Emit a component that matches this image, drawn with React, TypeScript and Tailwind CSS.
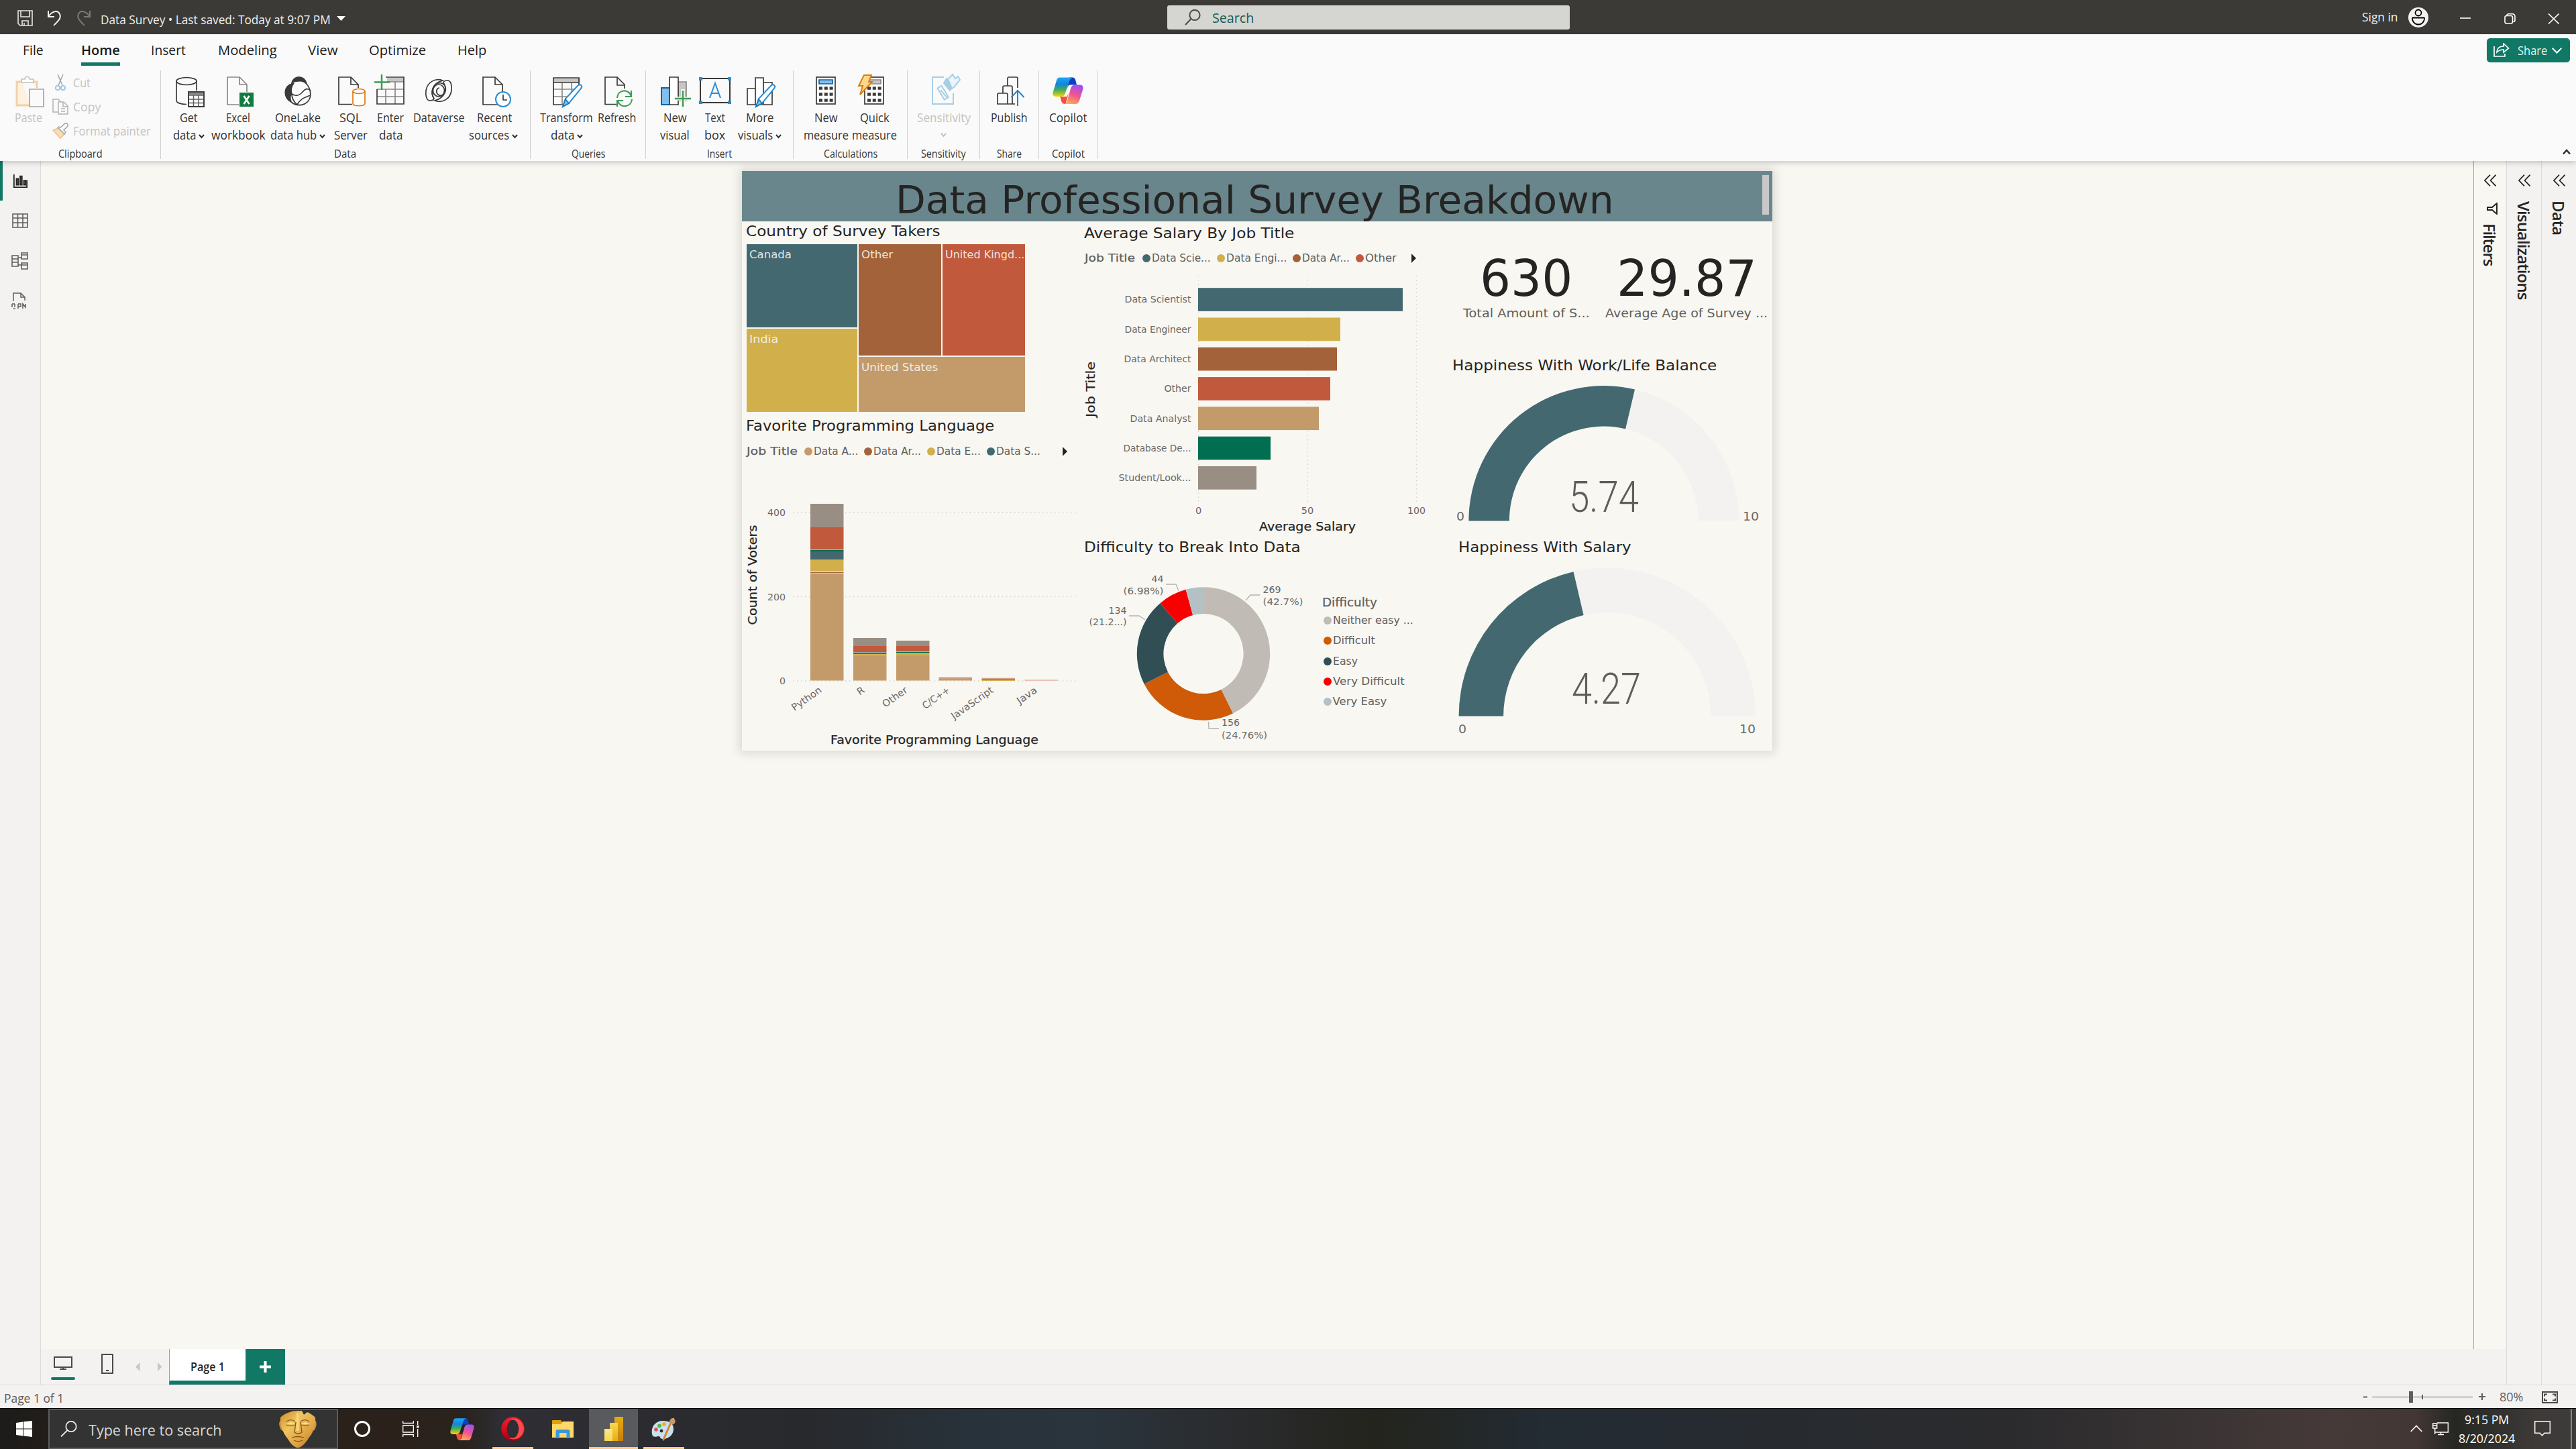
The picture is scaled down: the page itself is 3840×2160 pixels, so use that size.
import { useLayoutEffect, useRef } from "react";
import type { ReactNode } from "react";

/* Text squeezed or stretched horizontally to the width of its box. */
function Fit({ className = "", children }: { className?: string; children: ReactNode }) {
  const outer = useRef<HTMLSpanElement>(null);
  const inner = useRef<HTMLSpanElement>(null);
  useLayoutEffect(() => {
    const o = outer.current;
    const i = inner.current;
    if (o && i && i.offsetWidth > 0) {
      i.style.transform = `scaleX(${o.clientWidth / i.offsetWidth})`;
    }
  });
  return (
    <span ref={outer} className={"block shrink-0 " + className}>
      <span ref={inner} className="block w-max origin-left whitespace-nowrap">
        {children}
      </span>
    </span>
  );
}

/* Chart label inside an SVG. */
function Label(p: {
  x: number;
  y: number;
  w?: number;
  size?: number;
  fill?: string;
  anchor?: "start" | "middle" | "end";
  rotate?: number;
  heavy?: boolean;
  children: string;
}) {
  return (
    <text
      x={p.x}
      y={p.y}
      fontSize={p.size ?? 14.5}
      fill={p.fill ?? "#6a6866"}
      stroke={p.heavy ? "#252423" : undefined}
      strokeWidth={p.heavy ? 0.25 : undefined}
      textAnchor={p.anchor ?? "start"}
      textLength={p.w}
      lengthAdjust="spacingAndGlyphs"
      transform={p.rotate ? `rotate(${p.rotate} ${p.x} ${p.y})` : undefined}
    >
      {p.children}
    </text>
  );
}

const TEAL = "#436870";
const GOLD = "#d1b04b";
const BROWN = "#a3623a";
const RED = "#c1593c";
const TAN = "#c39b6a";
const GREEN = "#026e51";
const GREY = "#998e83";

/* ------------------------------- icons -------------------------------- */

function Chevron({ className = "" }: { className?: string }) {
  return (
    <svg className={"shrink-0 " + className} width="9" height="7" viewBox="0 0 9 7" fill="none" stroke="currentColor" strokeWidth="2">
      <path d="M1 1l3.5 4L8 1" />
    </svg>
  );
}

function Ico({ className = "", children }: { className?: string; children: ReactNode }) {
  return (
    <svg width="48" height="48" viewBox="0 0 48 48" fill="none" stroke="#3b3a39" strokeWidth="1.7" className={"shrink-0 overflow-visible " + className}>
      {children}
    </svg>
  );
}

const page = "M4 4h18l11 11v30H4zM22 4v11h11";

const GetDataIcon = () => (
  <Ico className="ml-[4px]">
    <ellipse cx="19" cy="10" rx="15" ry="5.5" />
    <path d="M4 10v29c0 3 6 5.500 15 5.500M34 10v14" />
    <rect x="22" y="26" width="23" height="22" fill="#fff" />
    <path d="M22 28h23" strokeWidth="4" stroke="#8a8886" />
    <path d="M22 31h23M22 37h23M22 42.500h23M29.500 31v17M37 31v17" stroke="#605e5c" strokeWidth="1.500" />
    <rect x="22" y="26" width="23" height="22" />
  </Ico>
);
const ExcelIcon = () => (
  <Ico className="ml-[8px]">
    <path d="M21 45H4V4h18l11 11v11M22 4v11h11" stroke="#8a8886" />
    <rect x="22" y="27" width="21" height="21" fill="#107c41" stroke="none" />
    <path d="M28.500 32l8 12M36.500 32l-8 12" stroke="#fff" strokeWidth="2.600" />
  </Ico>
);
const OneLakeIcon = () => (
  <Ico className="ml-[3px]">
    <path d="M35 13c7 7 9 19 4 26c-7 9-19 8-26 2" />
    <path d="M14 13c2-12 19-13 22 1c-4-4-9-5-13-4c-4 0-7 1-9 3z" fill="#3b3a39" />
    <path d="M15 14C1 16 1 36 13 41c-2-5-2-9 1-12c-2-6-1-11 3-16z" fill="#3b3a39" />
    <path d="M14 29c6 4 12 2 16-3c4-5 8-6 12-2M14 29c0 7 3 12 8 16c4-7 8-10 20-14" />
  </Ico>
);
const SqlIcon = () => (
  <Ico className="ml-[5px]">
    <path d="M24 44.500H4V4h18l11 11v5M22 4v11h11" />
    <path d="M25 25v18c0 5 18 5 18 0V25" stroke="#e07a10" fill="#fff" />
    <ellipse cx="34" cy="25" rx="9" ry="3.500" stroke="#e07a10" fill="#fff" />
  </Ico>
);
const EnterIcon = () => (
  <Ico>
    <path d="M19 5h25v6H19z" fill="#c8c6c4" stroke="none" />
    <path d="M19 11h25M4 22h40M4 33h40M17 22v22M31 11v33" stroke="#8a8886" />
    <path d="M17 4h27v40H4V22" />
    <path d="M11 0v23M0 11.500h23" stroke="#3f9b53" strokeWidth="2.500" />
  </Ico>
);
const DataverseIcon = () => (
  <Ico>
    <path d="M30 9C19 5 7 11 5 24c-1 8 1 15 6 15c5 0 6-3 6-3C11 27 14 13 30 9z" />
    <path d="M18 39c11 4 23-2 25-15c1-8-1-15-6-15c-5 0-6 3-6 3c6 9 3 23-13 27z" />
    <ellipse cx="24" cy="24" rx="8.500" ry="9" />
    <path d="M17 36c-5-8-3-20 6-23c7-2 13 4 11 12c-2 7-9 8-12 4c-3-5 0-9 3-9" />
  </Ico>
);
const RecentIcon = () => (
  <Ico className="ml-[9px]">
    <path d={page} />
    <circle cx="34" cy="37" r="11" fill="#fff" stroke="#2a8dd4" strokeWidth="2" />
    <path d="M34 30v8h6" />
  </Ico>
);
const Pencil = () => (
  <>
    <path d="M18 48l4-12L40 17c4-4 8 0 5 4L27 43z" fill="#fff" stroke="#2a8dd4" strokeWidth="2" />
    <path d="M18 48l4-11l5 6z" fill="#83beec" stroke="#1f77b8" />
  </>
);
const TransformIcon = () => (
  <Ico>
    <path d="M4 6h40v6H4z" fill="#c8c6c4" stroke="none" />
    <path d="M4 22h32M4 33h20M17 12v32M31 12v14" stroke="#8a8886" />
    <path d="M42 20V5H4v40h17M4 12h38" />
    <Pencil />
  </Ico>
);
const RefreshIcon = () => (
  <Ico className="ml-[5px]">
    <path d="M21 44.500H4V4h18l11 11v6M22 4v12h11" />
    <g stroke="#3f9b53" strokeWidth="2.200">
      <path d="M22 35c1-13 17-14 21-3M43 24v9h-9M44 37c-1 12-17 14-21 3M22 48v-9h9" />
    </g>
  </Ico>
);
const NewVisualIcon = () => (
  <Ico className="ml-[2px]">
    <path d="M3 20h12v25H3z" fill="#83beec" stroke="#0f62a4" strokeWidth="2" />
    <path d="M28 11h12v28H28z" fill="#c8c6c4" stroke="#8a8886" />
    <path d="M15 4h13v41H15z" fill="#fff" />
    <path d="M35 22v27M22 36h25" stroke="#fafafa" strokeWidth="5.500" />
    <path d="M35 24v24M23 36h24" stroke="#3f9b53" strokeWidth="2.400" />
  </Ico>
);
const TextBoxIcon = () => (
  <Ico>
    <rect x="2" y="6" width="44" height="36" strokeWidth="2" />
    <path d="M16 35l8-22l8 22M18.500 28h11" stroke="#2a8dd4" strokeWidth="2" />
    <path d="M0 4h5v5H0zM43 4h5v5h-5zM0 39h5v5H0zM43 39h5v5h-5z" fill="#2a8dd4" stroke="none" />
  </Ico>
);
const MoreVisualsIcon = () => (
  <Ico>
    <path d="M5 21h12v24H5zM17 5h12v40H17zM29 12h13v33H29z" fill="#fff" />
    <Pencil />
  </Ico>
);
const CalcGlyph = ({ accent }: { accent: boolean }) => (
  <>
    <rect x="10" y="4" width="28" height="40" fill="#fff" />
    <path d="M14 8h20v6H14z" fill={accent ? "#83beec" : "#c8c6c4"} stroke={accent ? "#0f62a4" : "#8a8886"} />
    <path d="M14 20.500h21M14 29.500h21M14 38.500h21" strokeWidth="4.500" strokeDasharray="5 2.800" />
  </>
);
const NewMeasureIcon = () => (
  <Ico>
    <CalcGlyph accent />
  </Ico>
);
const QuickMeasureIcon = () => (
  <Ico>
    <g transform="translate(-1 0)">
      <CalcGlyph accent={false} />
    </g>
    <path d="M8 1h11l-4 10h5L2 30l4-13H0z" fill="#ffd98a" stroke="#e07a10" strokeWidth="2" />
  </Ico>
);
const SensitivityIcon = () => (
  <Ico>
    <g stroke="#a6cfe6" strokeWidth="2">
      <path d="M24 4H7v40h31V28" />
      <path d="M14 23l5-5l14 14l-5 5z" fill="#fff" transform="rotate(14 24 24)" />
      <path d="M19 23l9 11" />
      <path d="M24 13l4-7l8 14l-3 4z" fill="#a6cfe6" />
      <path d="M30 7l7-7l4 6l4-3l3 5l-9 11l-3 2z" fill="#eaf4fa" />
    </g>
  </Ico>
);
const PublishIcon = () => (
  <Ico className="ml-[7px]">
    <path d="M18 17V6a2 2 0 0 1 2-2h11a2 2 0 0 1 2 2v14M11 28V19a2 2 0 0 1 2-2h10a2 2 0 0 1 2 2v25M3 44V30a2 2 0 0 1 2-2h11a2 2 0 0 1 2 2v14zM18 44h11" />
    <path d="M33 47V24M23.500 34L33 24l9.500 10" stroke="#2a7fc0" strokeWidth="2" />
  </Ico>
);

function CopilotMark({ id, className }: { id: string; className: string }) {
  return (
    <svg className={className} viewBox="0 0 108 98" preserveAspectRatio="none">
      <defs>
        <linearGradient id={id + "a"} x1="0" y1="0" x2="0" y2="1">
          <stop offset="0" stopColor="#19a8f8" />
          <stop offset="0.35" stopColor="#1585d8" />
          <stop offset="0.65" stopColor="#44ad5a" />
          <stop offset="1" stopColor="#fbd406" />
        </linearGradient>
        <linearGradient id={id + "b"} x1="0.7" y1="0" x2="0.3" y2="1">
          <stop offset="0" stopColor="#9b51f5" />
          <stop offset="0.5" stopColor="#ef5490" />
          <stop offset="1" stopColor="#ffae52" />
        </linearGradient>
      </defs>
      <path d="M58 1H70C80 1 80 10 85 28H62C54 28 55 34 52 40Z" fill="#0b3fc4" />
      <path d="M50 71H24C30 71 28 84 32 90C35 98 40 98 46 98L56 60Z" fill="#f2523d" />
      <path d="M25 1H75C67 1 62 6 59 14L44 60C41 69 36 71 28 71H12C2 71-1 64 2 54L14 12C16 5 19 1 25 1Z" fill={`url(#${id}a)`} />
      <path d="M80 28H96C106 28 109 36 106 46L94 86C91 95 87 98 81 98H40C47 98 50 92 52 84L64 40C67 31 72 28 80 28Z" fill={`url(#${id}b)`} />
    </svg>
  );
}

/* ------------------------------ title bar ----------------------------- */

function TitleBar() {
  return (
    <div className="flex h-[51px] shrink-0 bg-[#3b3a37] text-white">
      <div className="flex w-[1740px]">
        <svg className="ml-[26px] mt-[15px] h-[24px] w-[23px]" viewBox="0 0 23 24" fill="none" stroke="#e8e8e8" strokeWidth="1.600">
          <path d="M1 1h21v22H4l-3-3zM5 1v9h13V1M7 23v-7h9v7M10 19v4" />
        </svg>
        <svg className="ml-[21px] mt-[15px] h-[24px] w-[22px]" viewBox="0 0 22 24" fill="none" stroke="#f0f0f0" strokeWidth="2">
          <path d="M2 1v9h9M2 10C7 2 16-1 19 6c3 6-3 11-9 17" />
        </svg>
        <svg className="ml-[22px] mt-[15px] h-[24px] w-[22px]" viewBox="0 0 22 24" fill="none" stroke="#7b7a78" strokeWidth="2">
          <path d="M20 1v9h-9M20 10C15 2 6-1 3 6c-3 6 3 11 9 17" />
        </svg>
        <Fit className="ml-[14px] mt-[4px] w-[343px] text-[17.5px] leading-[51px] text-[#f0f0ef]">Data Survey • Last saved: Today at 9:07 PM</Fit>
        <svg className="ml-[9px] mt-[24px] h-[7px] w-[13px]" viewBox="0 0 13 7">
          <path d="M0 0h13L6.500 7z" fill="#fff" />
        </svg>
      </div>
      <div className="mt-[8px] flex h-[36px] w-[600px] rounded-[3px] bg-[#d5d5d2] text-[#185c50]">
        <svg className="ml-[26px] mt-[6px] h-[24px] w-[24px]" viewBox="0 0 24 24" fill="none" stroke="#4a4a48" strokeWidth="2">
          <circle cx="15" cy="8.500" r="7.600" />
          <path d="M9.500 14L1 23" />
        </svg>
        <Fit className="ml-[17px] mt-px w-[62px] text-[20px] leading-[36px]">Search</Fit>
      </div>
      <div className="ml-auto flex w-[320px]">
        <Fit className="ml-px w-[54px] text-[18px] leading-[51px] text-[#f0f0ef]">Sign in</Fit>
        <svg className="ml-[15px] mt-[11px] h-[30px] w-[30px]" viewBox="0 0 30 30">
          <circle cx="15" cy="15" r="15" fill="#f3f2f1" />
          <g fill="none" stroke="#000" strokeWidth="1.800">
            <circle cx="15" cy="8" r="4.500" />
            <path d="M6.500 15.500h17c1.500 0 0 10-8.500 10s-10-10-8.500-10z" />
          </g>
        </svg>
        <svg className="ml-[47px] mt-[20px] h-[16px] w-[148px]" viewBox="0 0 148 16" fill="none" stroke="#fff" strokeWidth="1.600">
          <path d="M0 7h16" />
          <rect x="67" y="3.500" width="11.500" height="11.500" rx="2.500" />
          <path d="M70 3c0-1.500 1-2.200 2.500-2.200h5.500c3 0 4 1 4 4v5.200c0 1.500-1 2.500-2.500 2.500" />
          <path d="M132 .5l15.500 15M147.500 .5L132 15.500" />
        </svg>
      </div>
    </div>
  );
}

/* -------------------------------- ribbon ------------------------------ */

function Tab({ className, active, children }: { className: string; active?: boolean; children: string }) {
  return (
    <div className="flex flex-col">
      <Fit className={className + (active ? " font-semibold" : "")}>{children}</Fit>
      {active && <div className="mt-[5px] ml-[56px] h-[5px] bg-[#117865]" />}
    </div>
  );
}

function TabRow() {
  return (
    <div className="flex h-[54px] shrink-0 pt-[11px] text-[20px] leading-[26px] text-[#1b1a19]">
      <Tab className="ml-[34px] w-[31px]">File</Tab>
      <Tab className="ml-[56px] w-[58px]" active>
        Home
      </Tab>
      <Tab className="ml-[46px] w-[52px]">Insert</Tab>
      <Tab className="ml-[48px] w-[88px]">Modeling</Tab>
      <Tab className="ml-[46px] w-[45px]">View</Tab>
      <Tab className="ml-[46px] w-[85px]">Optimize</Tab>
      <Tab className="ml-[47px] w-[43px]">Help</Tab>
      <div className="mt-[-5px] mr-[9px] ml-auto flex h-[36px] w-[124px] rounded-[5px] bg-[#117865] text-white">
        <svg className="ml-[10px] mt-[7px] h-[21px] w-[24px]" viewBox="0 0 24 21" fill="none" stroke="#fff" strokeWidth="1.700">
          <path d="M1 5v15h16v-4" />
          <path d="M15 1l7.500 7l-7.500 6v-4c-4 0-7 1-10 4c0-5 3-9 10-9z" />
        </svg>
        <Fit className="ml-[12px] w-[44px] text-[18px] leading-[37px] text-[#e6f1ef]">Share</Fit>
        <svg className="ml-[7px] mt-[14px] h-[9px] w-[15px]" viewBox="0 0 15 9" fill="none" stroke="#fff" strokeWidth="2">
          <path d="M.7 .7l6.800 7l6.800-7" />
        </svg>
      </div>
    </div>
  );
}

function RibbonButton(p: { box: string; icon: ReactNode; one: string; oneW: string; two?: string; twoW?: string; drop?: boolean; faded?: boolean }) {
  return (
    <div className={"flex shrink-0 flex-col items-center pt-[6px] " + p.box + (p.faded ? " text-[#c4c2c0]" : "")}>
      {p.icon}
      <Fit className={"mt-[3px] h-[26px] " + p.oneW}>{p.one}</Fit>
      {p.two && (
        <div className="flex items-center gap-[4px]">
          <Fit className={p.twoW}>{p.two}</Fit>
          {p.drop && <Chevron className="mt-[4px]" />}
        </div>
      )}
      {!p.two && p.drop && <Chevron className="mt-[10px]" />}
    </div>
  );
}

function Group({ box, name, nameW, children }: { box: string; name: string; nameW: string; children: ReactNode }) {
  return (
    <>
      <div className={"flex shrink-0 flex-col " + box}>
        <div className="flex h-[113px]">{children}</div>
        <div className="flex h-[22px] justify-center text-[16px] leading-[22px] text-[#323130]">
          <Fit className={nameW}>{name}</Fit>
        </div>
      </div>
      <div className="h-[132px] w-px shrink-0 bg-[#d2d0ce]" />
    </>
  );
}

function Ribbon() {
  return (
    <div className="flex h-[135px] shrink-0 text-[18px] leading-[26px] text-[#323130]">
      <Group box="w-[239px]" name="Clipboard" nameW="w-[66px]">
        <div className="ml-[20px] flex w-[48px] flex-col items-center pt-[6px] text-[#c4c2c0]">
          <Ico>
            <g stroke="#f5cfa3" strokeWidth="3">
              <path d="M26 46H5V11h8M28 11h7v9" fill="#fdf1e2" />
            </g>
            <path d="M12 12V7h5c1-5 6-5 7 0h6v5z" stroke="#c4c2c0" fill="#fff" />
            <path d="M24 22h21v26H24z" stroke="#a6a4a2" fill="#fafafa" />
          </Ico>
          <Fit className="mt-[3px] mr-[3px] w-[41px]">Paste</Fit>
        </div>
        <div className="ml-[10px] flex flex-col leading-[36px] text-[#c4c2c0]">
          <div className="flex h-[36px] items-center gap-[7px]">
            <svg width="24" height="24" viewBox="0 0 24 24" fill="none" stroke="#a6a4a2" strokeWidth="1.500">
              <path d="M8 0l7 16M16 0L9 16" />
              <circle cx="8" cy="20" r="3.200" stroke="#9cc7e6" strokeWidth="2" />
              <circle cx="16" cy="20" r="3.200" stroke="#9cc7e6" strokeWidth="2" />
            </svg>
            <Fit className="w-[26px]">Cut</Fit>
          </div>
          <div className="flex h-[36px] items-center gap-[7px]">
            <svg width="24" height="24" viewBox="0 0 24 24" fill="none" stroke="#b5b3b1" strokeWidth="1.500">
              <path d="M9 20H1V1h8l3 3M9 5h8l6 6v12H9zM16 5v7h7M13 15h6M13 19h6" />
            </svg>
            <Fit className="w-[41px]">Copy</Fit>
          </div>
          <div className="flex h-[36px] items-center gap-[7px]">
            <svg width="24" height="24" viewBox="0 0 24 24" fill="none" stroke="#a6a4a2" strokeWidth="1.500">
              <path d="M1 11l8-3l9 9l-6 6z" fill="#fbdcb8" stroke="#f0bd85" />
              <path d="M8 7l10 10l2-3l-3-3l6-6c1-3-2-5-4-4l-7 6l-2-1z" fill="#fafafa" />
            </svg>
            <Fit className="w-[116px]">Format painter</Fit>
          </div>
        </div>
      </Group>
      <Group box="w-[550px]" name="Data" nameW="mr-px w-[33px]">
        <RibbonButton box="ml-[9px] w-[64px]" icon={<GetDataIcon />} one="Get" oneW="w-[27px]" two="data" twoW="w-[34px]" drop />
        <RibbonButton box="w-[84px]" icon={<ExcelIcon />} one="Excel" oneW="w-[36px]" two="workbook" twoW="w-[81px]" />
        <RibbonButton box="w-[93px]" icon={<OneLakeIcon />} one="OneLake" oneW="w-[68px]" two="data hub" twoW="w-[69px]" drop />
        <RibbonButton box="w-[65px]" icon={<SqlIcon />} one="SQL" oneW="w-[33px]" two="Server" twoW="w-[50px]" />
        <RibbonButton box="w-[54px]" icon={<EnterIcon />} one="Enter" oneW="w-[40px]" two="data" twoW="w-[35px]" />
        <RibbonButton box="w-[90px]" icon={<DataverseIcon />} one="Dataverse" oneW="w-[77px]" />
        <RibbonButton box="w-[72px]" icon={<RecentIcon />} one="Recent" oneW="ml-[3px] w-[52px]" two="sources" twoW="w-[60px]" drop />
      </Group>
      <Group box="w-[171px]" name="Queries" nameW="w-[50px]">
        <RibbonButton box="ml-[14px] w-[79px]" icon={<TransformIcon />} one="Transform" oneW="w-[79px]" two="data" twoW="w-[35px]" drop />
        <RibbonButton box="w-[70px]" icon={<RefreshIcon />} one="Refresh" oneW="w-[57px]" />
      </Group>
      <Group box="w-[219px]" name="Insert" nameW="w-[37px]">
        <RibbonButton box="ml-[18px] w-[50px]" icon={<NewVisualIcon />} one="New" oneW="w-[35px]" two="visual" twoW="w-[44px]" />
        <RibbonButton box="w-[69px]" icon={<TextBoxIcon />} one="Text" oneW="w-[30px]" two="box" twoW="w-[31px]" />
        <RibbonButton box="w-[65px]" icon={<MoreVisualsIcon />} one="More" oneW="w-[41px]" two="visuals" twoW="w-[52px]" drop />
      </Group>
      <Group box="w-[169px]" name="Calculations" nameW="w-[80px]">
        <RibbonButton box="ml-[14px] w-[68px]" icon={<NewMeasureIcon />} one="New" oneW="w-[35px]" two="measure" twoW="w-[67px]" />
        <RibbonButton box="w-[77px]" icon={<QuickMeasureIcon />} one="Quick" oneW="w-[44px]" two="measure" twoW="w-[67px]" />
      </Group>
      <Group box="w-[107px]" name="Sensitivity" nameW="w-[67px]">
        <RibbonButton box="w-[107px]" icon={<SensitivityIcon />} one="Sensitivity" oneW="w-[80px]" drop faded />
      </Group>
      <Group box="w-[87px]" name="Share" nameW="w-[37px]">
        <RibbonButton box="w-[87px]" icon={<PublishIcon />} one="Publish" oneW="w-[55px]" />
      </Group>
      <Group box="w-[86px]" name="Copilot" nameW="w-[49px]">
        <RibbonButton
          box="w-[86px]"
          icon={
            <div className="flex h-[48px] items-center">
              <CopilotMark id="rc" className="h-[40px] w-[46px]" />
            </div>
          }
          one="Copilot"
          oneW="w-[57px]"
        />
      </Group>
      <svg className="mt-auto mr-[8px] mb-[9px] ml-auto" width="12" height="9" viewBox="0 0 12 9" fill="none" stroke="#323130" strokeWidth="2.600">
        <path d="M1 7.500l5-5.500l5 5.500" />
      </svg>
    </div>
  );
}

/* --------------------------- report visuals --------------------------- */

function VisualTitle({ className, children }: { className: string; children: string }) {
  return <Fit className={"h-[30px] text-[20.5px] leading-[30px] text-[#252423] " + className}>{children}</Fit>;
}

function Dot({ className }: { className: string }) {
  return <span className={"mr-[2px] block size-[12px] shrink-0 rounded-full " + className} />;
}

function Key({ dot, w, children }: { dot: string; w: string; children: string }) {
  return (
    <span className="flex items-center">
      <Dot className={dot} />
      <Fit className={w}>{children}</Fit>
    </span>
  );
}

function NextArrow({ className }: { className: string }) {
  return (
    <svg className={"shrink-0 overflow-visible " + className} width="7" height="14" viewBox="0 0 7 14">
      <path d="M0 0l7 7l-7 7z" fill="#252423" stroke="#fff" strokeWidth="3" paintOrder="stroke" />
    </svg>
  );
}

function Tile({ className, w, children }: { className: string; w: string; children: string }) {
  return (
    <div className={"overflow-hidden pt-[6px] pl-[4px] text-[16px] leading-[20px] text-[#f8f7f2]/90 " + className}>
      <Fit className={w}>{children}</Fit>
    </div>
  );
}

function Treemap() {
  return (
    <div className="mt-[4px] ml-[7px] flex h-[250px] w-[414.500px] gap-[2px]">
      <div className="flex w-[165px] flex-col gap-[2px]">
        <Tile className="h-[124px] bg-[#436870]" w="w-[63px]">
          Canada
        </Tile>
        <Tile className="h-[124px] bg-[#d1b04b]" w="w-[43px]">
          India
        </Tile>
      </div>
      <div className="flex flex-1 flex-col gap-[2px]">
        <div className="flex h-[166px] gap-[2px]">
          <Tile className="w-[123px] bg-[#a3623a]" w="w-[47px]">
            Other
          </Tile>
          <Tile className="flex-1 bg-[#c1593c]" w="w-[118px]">
            United Kingd...
          </Tile>
        </div>
        <Tile className="h-[82px] bg-[#c39b6a]" w="w-[114px]">
          United States
        </Tile>
      </div>
    </div>
  );
}

const stacks: { x: number; parts: [string, number, number][] }[] = [
  { x: 1208, parts: [[GREY, 751, 786], [RED, 786, 819.5], [GREEN, 820, 822], [TEAL, 822, 834.500], [GOLD, 834.500, 852], [BROWN, 853, 854], [TAN, 854.500, 1014.500]] },
  { x: 1272, parts: [[GREY, 951, 963], [RED, 963, 972], [TEAL, 972.5, 975], [GOLD, 975, 976.500], [TAN, 976.500, 1014.500]] },
  { x: 1336, parts: [[GREY, 955, 963], [RED, 963, 971.500], [GREEN, 972, 973.500], [GOLD, 974, 977], [TAN, 977, 1014.500]] },
  { x: 1399.5, parts: [[RED, 1010, 1011.500], [TAN, 1011.500, 1014.500]] },
  { x: 1463.5, parts: [["#c9c3bc", 1010.500, 1011.5], [RED, 1011.5, 1013.500], [GOLD, 1013.500, 1015]] },
  { x: 1527.5, parts: [["#e9c4b8", 1013, 1015]] },
];

const languages: [string, number, number][] = [
  ["Python", 1226, 51],
  ["R", 1290, 10],
  ["Other", 1354, 42],
  ["C/C++", 1417, 46],
  ["JavaScript", 1482, 73],
  ["Java", 1547, 33],
];

function LanguageChart() {
  return (
    <svg className="block shrink-0" width="498" height="434" viewBox="1106 685 498 434">
      <g stroke="#d0cecb" strokeWidth="1.300" strokeDasharray="1.300 4.700">
        <path d="M1182 764H1604M1182 889.500H1604M1182 1015H1604" />
      </g>
      <Label x={1171} y={769} w={27} anchor="end">400</Label>
      <Label x={1171} y={894.500} w={27} anchor="end">200</Label>
      <Label x={1171} y={1020} w={9} anchor="end">0</Label>
      {stacks.map((s) => s.parts.map(([c, a, b]) => <rect key={s.x + "-" + a} x={s.x} y={a} width="49.500" height={b - a} fill={c} />))}
      {languages.map(([n, x, w]) => (
        <Label key={n} x={x} y={1031} w={w} anchor="end" rotate={-35}>
          {n}
        </Label>
      ))}
      <Label x={1238} y={1109} w={310} size={18} fill="#252423" heavy>Favorite Programming Language</Label>
      <Label x={1128} y={931.500} w={149} size={18} fill="#252423" rotate={-90} heavy>Count of Voters</Label>
    </svg>
  );
}

const salaries: [string, number, number, string][] = [
  ["Data Scientist", 99, 305, TEAL],
  ["Data Engineer", 99, 212, GOLD],
  ["Data Architect", 100, 207, BROWN],
  ["Other", 40, 197, RED],
  ["Data Analyst", 91, 180, TAN],
  ["Database De...", 101, 108, GREEN],
  ["Student/Look...", 108, 87, GREY],
];

function SalaryChart() {
  return (
    <svg className="block shrink-0" width="536" height="404" viewBox="1604 397 536 404">
      <g stroke="#d0cecb" strokeWidth="1.300" strokeDasharray="1.300 4.800">
        <path d="M1786.500 411V751M1949 411V751M2111.500 411V751" />
      </g>
      {salaries.map(([n, w, len, c], i) => (
        <g key={n}>
          <rect x="1786" y={429.200 + i * 44.300} width={len} height="34.700" fill={c} />
          <Label x={1775.500} y={451.300 + i * 44.300} w={w} anchor="end">
            {n}
          </Label>
        </g>
      ))}
      <Label x={1786.500} y={766} anchor="middle">0</Label>
      <Label x={1949} y={766} anchor="middle">50</Label>
      <Label x={2111.500} y={766} w={27} anchor="middle">100</Label>
      <Label x={1877} y={790.500} w={144} size={18} fill="#252423" heavy>Average Salary</Label>
      <Label x={1632} y={622} w={83} size={18} fill="#252423" rotate={-90} heavy>Job Title</Label>
    </svg>
  );
}

function ring(cx: number, cy: number, R: number, r: number, a0: number, a1: number) {
  const at = (rad: number, a: number) => {
    const t = ((a - 90) * Math.PI) / 180;
    return `${(cx + rad * Math.cos(t)).toFixed(2)} ${(cy + rad * Math.sin(t)).toFixed(2)}`;
  };
  const big = a1 - a0 > 180 ? 1 : 0;
  return `M${at(R, a0)}A${R} ${R} 0 ${big} 1 ${at(R, a1)}L${at(r, a1)}A${r} ${r} 0 ${big} 0 ${at(r, a0)}Z`;
}

const slices: [number, number, string][] = [
  [0, 153.700, "#c1bbb5"],
  [153.700, 242.900, "#cf5a07"],
  [242.900, 319.400, "#314e55"],
  [319.400, 344.600, "#f80000"],
  [344.600, 360, "#b3c1c5"],
];

function Donut() {
  return (
    <svg className="block shrink-0" width="367" height="288" viewBox="1604 831 367 288">
      {slices.map(([a, b, c]) => (
        <path key={c} d={ring(1794, 974.500, 99.200, 59.600, a, b)} fill={c} />
      ))}
      <g fill="none" stroke="#b5b2ae" strokeWidth="1.300">
        <path d="M1857 895l7-8h14M1738 871h15l4 9.500M1683 918h15l9 6M1801.500 1076l.5 10h15" />
      </g>
      <Label x={1882.500} y={884} w={27}>269</Label>
      <Label x={1882.500} y={901.500} w={60}>(42.7%)</Label>
      <Label x={1734.500} y={867.500} w={18} anchor="end">44</Label>
      <Label x={1734.500} y={885.500} w={60} anchor="end">(6.98%)</Label>
      <Label x={1679.500} y={915} w={27} anchor="end">134</Label>
      <Label x={1679.500} y={932} w={56} anchor="end">(21.2...)</Label>
      <Label x={1821} y={1082} w={27}>156</Label>
      <Label x={1821} y={1100.500} w={68}>(24.76%)</Label>
    </svg>
  );
}

function Report() {
  return (
    <div className="mt-[15px] ml-[1045px] flex h-[864px] w-[1536px] flex-col bg-[#f8f7f2] font-['DejaVu_Sans',Verdana,sans-serif] shadow-[0_0_14px_4px_rgba(0,0,0,0.12)]">
      <div className="flex h-[75px] shrink-0 bg-[#69868d]">
        <Fit className="ml-[229px] w-[1071px] text-[57.5px] leading-[88px] text-[#252423]">Data Professional Survey Breakdown</Fit>
        <div className="mt-[6px] mr-[5px] ml-auto h-[59px] w-[10px] bg-[#c8c8c8]" />
      </div>
      <div className="flex flex-1 text-[#605e5c]">
        <div className="flex w-[498px] flex-col">
          <VisualTitle className="ml-[6px] w-[290px]">Country of Survey Takers</VisualTitle>
          <Treemap />
          <VisualTitle className="mt-[6px] ml-[6px] w-[370px]">Favorite Programming Language</VisualTitle>
          <div className="mt-[11px] flex h-[24px] items-center gap-[9px] pl-[7px] text-[16.5px] leading-[24px]">
            <Fit className="mr-px w-[76px] [-webkit-text-stroke:0.25px_#605e5c]">Job Title</Fit>
            <Key dot="bg-[#c39b6a]" w="w-[66px]">Data A...</Key>
            <Key dot="bg-[#a3623a]" w="w-[71px]">Data Ar...</Key>
            <Key dot="bg-[#d1b04b]" w="w-[66px]">Data E...</Key>
            <Key dot="bg-[#436870]" w="w-[66px]">Data S...</Key>
            <NextArrow className="ml-[24px]" />
          </div>
          <LanguageChart />
        </div>
        <div className="flex w-[536px] flex-col">
          <VisualTitle className="mt-[3px] ml-[12px] w-[313px]">Average Salary By Job Title</VisualTitle>
          <div className="mt-[10px] flex h-[24px] items-center gap-[9px] pl-[13px] text-[16.5px] leading-[24px]">
            <Fit className="mr-[2px] w-[75px] [-webkit-text-stroke:0.25px_#605e5c]">Job Title</Fit>
            <Key dot="bg-[#436870]" w="w-[88px]">Data Scie...</Key>
            <Key dot="bg-[#d1b04b]" w="w-[90px]">Data Engi...</Key>
            <Key dot="bg-[#a3623a]" w="w-[71px]">Data Ar...</Key>
            <Key dot="bg-[#c1593c]" w="w-[47px]">Other</Key>
            <NextArrow className="ml-[13px]" />
          </div>
          <SalaryChart />
          <VisualTitle className="ml-[12px] w-[323px]">Difficulty to Break Into Data</VisualTitle>
          <div className="flex">
            <Donut />
            <div className="mt-[55px] flex flex-col text-[16.5px] leading-[30.3px]">
              <Fit className="w-[82px] text-[17px] leading-[24px] [-webkit-text-stroke:0.25px_#605e5c]">Difficulty</Fit>
              <span className="flex flex-col pl-[1.500px]">
                <Key dot="bg-[#c1bbb5]" w="w-[120px]">Neither easy ...</Key>
                <Key dot="bg-[#cf5a07]" w="w-[63px]">Difficult</Key>
                <Key dot="bg-[#314e55]" w="w-[37px]">Easy</Key>
                <Key dot="bg-[#f80000]" w="w-[107px]">Very Difficult</Key>
                <Key dot="bg-[#b3c1c5]" w="w-[81px]">Very Easy</Key>
              </span>
            </div>
          </div>
        </div>
        <div className="flex w-[502px] flex-col">
          <div className="mt-[45px] flex gap-[23px] pl-[40px] text-[18.5px] leading-[26px]">
            <div className="flex w-[190px] flex-col items-center">
              <Fit className="w-[138px] text-[74px] leading-[81px] text-[#252423]">630</Fit>
              <Fit className="mt-[-2px] w-[189px]">Total Amount of S...</Fit>
            </div>
            <div className="flex w-[242px] flex-col items-center">
              <Fit className="w-[209px] text-[74px] leading-[81px] text-[#252423]">29.87</Fit>
              <Fit className="mt-[-2px] w-[242px]">Average Age of Survey ...</Fit>
            </div>
          </div>
          <VisualTitle className="mt-[50px] ml-[25px] w-[394px]">Happiness With Work/Life Balance</VisualTitle>
          <svg className="block shrink-0" width="502" height="241" viewBox="2140 560 502 241">
            <path d={ring(2390.700, 776.400, 201.300, 140.800, -90, 90)} fill="#f3f2f1" />
            <path d={ring(2390.700, 776.400, 201.300, 140.800, -90, 13.300)} fill={TEAL} />
            <text x="2339" y="762.500" fontFamily="Roboto, sans-serif" fontWeight="300" fontSize="64" textLength="104" lengthAdjust="spacingAndGlyphs" fill="#605e5c">5.74</text>
            <Label x={2177} y={776} w={12} size={18.500} anchor="middle">0</Label>
            <Label x={2598} y={776} w={24} size={18.500}>10</Label>
          </svg>
          <VisualTitle className="ml-[34px] w-[258px]">Happiness With Salary</VisualTitle>
          <svg className="block shrink-0" width="502" height="288" viewBox="2140 831 502 288">
            <path d={ring(2395.800, 1067.600, 221.200, 154.700, -90, 90)} fill="#f3f2f1" />
            <path d={ring(2395.800, 1067.600, 221.200, 154.700, -90, -13.140)} fill={TEAL} />
            <text x="2343" y="1049" fontFamily="Roboto, sans-serif" fontWeight="300" fontSize="64" textLength="103" lengthAdjust="spacingAndGlyphs" fill="#605e5c">4.27</text>
            <Label x={2180} y={1093} w={12} size={18.500} anchor="middle">0</Label>
            <Label x={2593} y={1093} w={24} size={18.500}>10</Label>
          </svg>
        </div>
      </div>
    </div>
  );
}

/* -------------------------- side panels & strip ----------------------- */

function LeftNav() {
  return (
    <div className="flex w-[61px] shrink-0 flex-col border-r border-[#dddbd9] bg-[#f3f2f1]">
      <div className="flex h-[59px] items-center border-l-4 border-[#117865] pl-[15px]">
        <svg width="22" height="22" viewBox="0 0 24 24" fill="none" stroke="#252423" strokeWidth="2">
          <path d="M2 1v21h21V10" />
          <path d="M6 8h3v10H6zM12 4h3v14h-3zM18 11h3v7h-3z" fill="#605e5c" />
        </svg>
      </div>
      <div className="flex h-[60px] items-center pl-[18px]">
        <svg width="24" height="24" viewBox="0 0 24 24" fill="none" stroke="#605e5c" strokeWidth="1.600">
          <path d="M1 2h22v20H1zM1 8h22M1 15h22M8.500 2v20M16 2v20" />
        </svg>
      </div>
      <div className="flex h-[60px] items-center pl-[17px]">
        <svg width="26" height="26" viewBox="0 0 26 26" fill="none" stroke="#605e5c" strokeWidth="1.600">
          <path d="M1 5h9v16H1zM1 10h9M1 15h9M15 1h9v9h-9zM15 4h9M15 16h9v9h-9zM15 19h9M10 8h5M10 19h5" />
        </svg>
      </div>
      <div className="flex h-[60px] items-center pl-[17px]">
        <svg width="26" height="26" viewBox="0 0 26 26" fill="none" stroke="#605e5c" strokeWidth="1.500">
          <path d="M3 13V1h11l6 6v5M14 1v6h6M3 24h3M1 17v5M5 17v5M1 17h4M10 17v7M10 17h4v4h-4M17 24v-7l4 5v-5" />
        </svg>
      </div>
    </div>
  );
}

function DoubleChevron() {
  return (
    <svg width="18" height="18" viewBox="0 0 18 18" fill="none" stroke="#252423" strokeWidth="1.700">
      <path d="M9 .7L1 9l8 8.300M17.500 .7L9.500 9l8 8.300" />
    </svg>
  );
}

const sideText = "mr-[2px] text-[24px] leading-[30px] font-semibold text-[#252423] [writing-mode:vertical-rl]";

function PageStrip() {
  return (
    <div className="flex h-[53px] shrink-0 bg-[#f3f2f1]">
      <div className="ml-[15px] flex w-[36px] flex-col items-center">
        <svg className="mt-[11px]" width="28" height="20" viewBox="0 0 28 20" fill="none" stroke="#4c4a48" strokeWidth="2">
          <path d="M1 1h26v15H1zM14 16v3M9 19h10" />
        </svg>
        <div className="mt-[11px] h-[4px] w-[36px] rounded-full bg-[#117865]" />
      </div>
      <svg className="mt-[7px] ml-[39px]" width="18" height="30" viewBox="0 0 18 30" fill="none" stroke="#4c4a48" strokeWidth="2">
        <path d="M1 1h16v28H1zM7 25h4" />
      </svg>
      <svg className="mt-[20px] ml-[33px]" width="40" height="13" viewBox="0 0 40 13" fill="#c8c6c4">
        <path d="M6.500 0v13L0 6.500zM33 0v13l6.500-6.500z" />
      </svg>
      <div className="ml-[10px] flex w-[114px] justify-center border-b-[6px] border-l border-b-[#117865] border-l-[#a19f9d] bg-white">
        <Fit className="mt-[2px] mr-px w-[51px] text-[18px] leading-[48px] font-semibold text-[#252423]">Page 1</Fit>
      </div>
      <div className="flex w-[59px] items-center justify-center bg-[#117865]">
        <svg width="17" height="17" viewBox="0 0 17 17" stroke="#fff" strokeWidth="4">
          <path d="M8.500 0v17M0 8.500h17" />
        </svg>
      </div>
    </div>
  );
}

function Workspace() {
  return (
    <div className="flex h-[1824px] shrink-0">
      <LeftNav />
      <div className="flex w-[3675px] shrink-0 flex-col">
        <div className="flex h-[1771px] bg-[#f8f7f2]">
          <div className="w-[3626px]">
            <div className="flex">
              <Report />
            </div>
          </div>
          <div className="flex w-[49px] flex-col items-center border-l border-[#a8a6a2] pt-[20px]">
            <DoubleChevron />
            <svg className="mt-[24px] ml-[6px]" width="16" height="18" viewBox="0 0 16 18" fill="none" stroke="#252423" strokeWidth="2">
              <path d="M15 1v16L8 11H1V7h7z" />
            </svg>
            <div className={"mt-[13px] tracking-[-1.2px] " + sideText}>Filters</div>
          </div>
        </div>
        <PageStrip />
      </div>
      <div className="flex w-[52px] shrink-0 flex-col items-center border-l border-[#dddbd9] bg-[#f3f2f1] pt-[20px]">
        <DoubleChevron />
        <div className={"mt-[22px] tracking-[-0.900px] " + sideText}>Visualizations</div>
      </div>
      <div className="flex w-[52px] shrink-0 flex-col items-center border-l border-[#dddbd9] bg-[#f3f2f1] pt-[20px]">
        <DoubleChevron />
        <div className={"mt-[21px] tracking-[-0.900px] " + sideText}>Data</div>
      </div>
    </div>
  );
}

function StatusBar() {
  return (
    <div className="flex h-[35px] shrink-0 border-t border-[#dddbd9] bg-[#f3f2f1] text-[18px] text-[#605e5c]">
      <Fit className="ml-[6px] w-[89px] leading-[38px] text-[#5a5856]">Page 1 of 1</Fit>
      <svg className="mt-[8px] ml-auto" width="184" height="20" viewBox="3523 2073 184 20" stroke="#605e5c" fill="none">
        <path d="M3523 2082.500h6M3695 2082h10M3700 2077v10" strokeWidth="2" />
        <path d="M3536 2082.500h150" />
        <path d="M3594 2074v17" strokeWidth="6" />
        <path d="M3611 2079v7" strokeWidth="2" />
      </svg>
      <Fit className="ml-[19px] w-[35px] leading-[35px]">80%</Fit>
      <svg className="mt-[9px] mr-[27px] ml-[28px]" width="24" height="18" viewBox="0 0 24 18" stroke="#4c4a48" fill="none" strokeWidth="2">
        <path d="M1 1h22v16H1z" />
        <path d="M4 7.500V4.500h4M16 4.500h4v3M20 10.500v3h-4M8 13.500H4v-3" />
      </svg>
    </div>
  );
}

/* ------------------------------- taskbar ------------------------------ */

function Taskbar() {
  return (
    <div className="flex h-[61px] shrink-0 border-t border-black bg-[linear-gradient(90deg,#1c1c1a_0px,#231d19_72px,#2b211b_520px,#2a221d_690px,#2e2e34_750px,#28292d_1200px,#28323a_1450px,#2a343d_1620px,#2a2b2d_1850px,#23241c_2050px,#232b33_2300px,#2b2b2d_3000px,#463a39_3480px,#433735_3600px,#262723_3660px,#3d3a38_3780px,#3d3a3a_3840px)] text-white">
      <div className="flex w-[72px] items-center justify-center">
        <svg width="24" height="24" viewBox="0 0 24 24" fill="#fff">
          <path d="M0 3l10-1.500v10H0zM11 1.300L24 0v11.500H11zM0 12.500h10v10L0 21zM11 12.500h13V24l-13-1.500z" />
        </svg>
      </div>
      <div className="flex w-[432px] border-2 border-[#5c5c5c] bg-[#333333] text-[#d8d8d8]">
        <svg className="mt-[16px] ml-[16px]" width="25" height="24" viewBox="0 0 25 24" fill="none" stroke="#e8e8e8" strokeWidth="1.800">
          <circle cx="16" cy="8.500" r="7.700" />
          <path d="M10.500 14L1 23.500" />
        </svg>
        <Fit className="ml-[17px] w-[198px] text-[22px] leading-[58px]">Type here to search</Fit>
        <svg className="mt-[1px] ml-[85px]" width="58" height="55" viewBox="0 0 58 55">
          <defs>
            <linearGradient id="mask" x1="0" y1="0" x2="1" y2="1">
              <stop offset="0" stopColor="#c98a2c" />
              <stop offset="0.35" stopColor="#f0c55e" />
              <stop offset="0.7" stopColor="#dca044" />
              <stop offset="1" stopColor="#a86820" />
            </linearGradient>
          </defs>
          <path d="M7 12C2 13 0 18 2 24s4 7 7 5zM51 12c5 1 7 6 5 12s-4 7-7 5z" fill="#c98f38" />
          <path d="M3 10C10 3 21 0 29 0h6l3 6l5-4c5 2 9 5 12 8c1 12-3 23-10 31c-5 8-11 14-16 14s-10-5-15-13C7 33 2 22 3 10z" fill="url(#mask)" />
          <g fill="none" stroke="#8a5318" strokeWidth="1.300">
            <path d="M12 16c4-3 9-3 13 0M33 16c4-3 9-3 13 0M12 21c4 2 9 2 12 0M34 21c4 2 9 2 12 0M26 17l-2 15c3 3 8 3 11 0l-2-15M20 40c6-2 12-2 18 0M23 44c4 2 9 2 13 0" />
          </g>
          <path d="M27 3l3 0l1 27h-4z" fill="#f8dd86" opacity="0.8" />
          <path d="M12 19c4-2 9-2 12 0c-4 1.500-8 1.500-12 0zM34 19c4-2 9-2 12 0c-4 1.500-8 1.500-12 0z" fill="#f9e08f" />
        </svg>
      </div>
      <div className="flex w-[72px] items-center justify-center">
        <div className="h-[24px] w-[24px] rounded-full border-[3px] border-white" />
      </div>
      <div className="flex w-[72px] items-center justify-center">
        <svg width="25" height="24" viewBox="0 0 25 24" fill="none" stroke="#fff" strokeWidth="1.300">
          <path d="M.7 0v3.500h15.600V0M.7 7h15.600v10H.7zM.7 24v-3.500h15.600V24M22.700 0v6M22.700 12v12" />
          <path d="M21 7h3.500v3.500H21z" fill="#fff" stroke="none" />
        </svg>
      </div>
      <div className="flex w-[81px] items-center justify-center">
        <CopilotMark id="tc" className="h-[33px] w-[36px]" />
      </div>
      <div className="flex w-[71px] flex-col items-center justify-between">
        <svg className="mt-[12px]" width="35" height="36" viewBox="0 0 35 36">
          <defs>
            <linearGradient id="opera" x1="0" y1="0" x2="0" y2="1">
              <stop offset="0" stopColor="#ff1b2d" />
              <stop offset="1" stopColor="#a70014" />
            </linearGradient>
          </defs>
          <ellipse cx="17.500" cy="18" rx="17.300" ry="17.800" fill="url(#opera)" />
          <path d="M12 4c12-5 22 4 22 14s-10 19-22 14c14 0 14-28 0-28z" fill="#ff4b4b" />
          <ellipse cx="17.500" cy="18" rx="8.800" ry="13.500" fill="#2e2e34" />
        </svg>
        <div className="h-[3px] w-[61px] bg-[#fdc98c]" />
      </div>
      <div className="flex w-[78px] items-center justify-center">
        <svg width="32" height="27" viewBox="0 0 32 27">
          <path d="M0 1c0-1 1-1 1-1h12l2 3v5H0z" fill="#dfa00f" />
          <path d="M0 6h13l3-4h16v23c0 1 0 1-1 1H1c-1 0-1 0-1-1z" fill="#ffd868" />
          <path d="M5.500 27V17c0-2 1-3 3-3h15c2 0 3 1 3 3v10h-5v-8H11v8z" fill="#3a96dd" />
        </svg>
      </div>
      <div className="flex w-[73px] flex-col items-center justify-between bg-[#595a5e]">
        <svg className="mt-[12px]" width="28" height="36" viewBox="0 0 28 36">
          <defs>
            <linearGradient id="pb" x1="0" y1="0" x2="0" y2="1">
              <stop offset="0" stopColor="#e6ad10" />
              <stop offset="1" stopColor="#c87e0e" />
            </linearGradient>
            <linearGradient id="pc" x1="0" y1="0" x2="0" y2="1">
              <stop offset="0" stopColor="#f6d751" />
              <stop offset="1" stopColor="#e6ad10" />
            </linearGradient>
            <linearGradient id="pd" x1="0" y1="0" x2="0" y2="1">
              <stop offset="0" stopColor="#f9e589" />
              <stop offset="1" stopColor="#f6d751" />
            </linearGradient>
          </defs>
          <rect x="15" width="13" height="36" rx="1" fill="url(#pb)" />
          <path d="M8 9h11c1 0 1 0 1 1v26H8z" fill="url(#pc)" />
          <path d="M0 18h11c1 0 1 0 1 1v17H1c-1 0-1 0-1-1z" fill="url(#pd)" />
        </svg>
        <div className="h-[3px] w-[73px] bg-[#fdc98c]" />
      </div>
      <div className="flex w-[76px] flex-col items-center justify-between">
        <svg className="mt-[13px]" width="36" height="35" viewBox="0 0 36 35">
          <path d="M17 5C6 5-1 14 1 25c1 6 7 3 10 3s1 4 6 4c10 0 16-7 16-15S27 5 17 5z" fill="#c4e2f2" />
          <circle cx="7" cy="18" r="2.800" fill="#e8503c" />
          <circle cx="12" cy="12.500" r="2.900" fill="#5bb54a" />
          <circle cx="19" cy="10" r="3" fill="#f3ae2d" />
          <circle cx="15" cy="20" r="2.400" fill="#2b2c30" />
          <path d="M28 10L18 33" stroke="#e58128" strokeWidth="3" strokeLinecap="round" />
          <path d="M27 9C26 4 30 0 34 1c0 2 3 4 1 7s-4 3-6 2z" fill="#c99a6a" />
        </svg>
        <div className="h-[3px] w-[61px] bg-[#fdc98c]" />
      </div>
      <svg className="mt-[24px] ml-auto" width="18" height="11" viewBox="0 0 18 11" fill="none" stroke="#fff" strokeWidth="1.600">
        <path d="M.7 10L9 1.500L17.300 10" />
      </svg>
      <svg className="mt-[20px] ml-[15px]" width="24" height="20" viewBox="0 0 24 20" fill="none" stroke="#fff" strokeWidth="1.400">
        <path d="M7 1h16.300v14H4M8 18.500h9M12.500 15v3.500M.7 2h6v7h-6zM.7 5h6M3.700 9v9" />
      </svg>
      <div className="ml-[15px] flex w-[84px] flex-col items-center pt-[2px] text-[18px] leading-[28px]">
        <Fit className="w-[66px]">9:15 PM</Fit>
        <Fit className="w-[84px]">8/20/2024</Fit>
      </div>
      <svg className="mt-[18px] ml-[29px]" width="24" height="24" viewBox="0 0 24 24" fill="none" stroke="#fff" strokeWidth="1.500">
        <path d="M.7 .7h22.600v17.600H15L11.500 22L8 18.300H.7z" />
      </svg>
      <div className="mr-[6px] ml-[30px] w-[2px] bg-[#8a8685]" />
    </div>
  );
}

export default function App() {
  return (
    <div className="flex h-[2160px] w-[3840px] flex-col overflow-hidden bg-[#f3f2f1] font-['Open_Sans','Noto_Sans',sans-serif]">
      <TitleBar />
      <div className="z-10 flex h-[189px] shrink-0 flex-col bg-[#fafafa] shadow-[0_2px_8px_rgba(0,0,0,0.22)]">
        <TabRow />
        <Ribbon />
      </div>
      <Workspace />
      <StatusBar />
      <Taskbar />
    </div>
  );
}
